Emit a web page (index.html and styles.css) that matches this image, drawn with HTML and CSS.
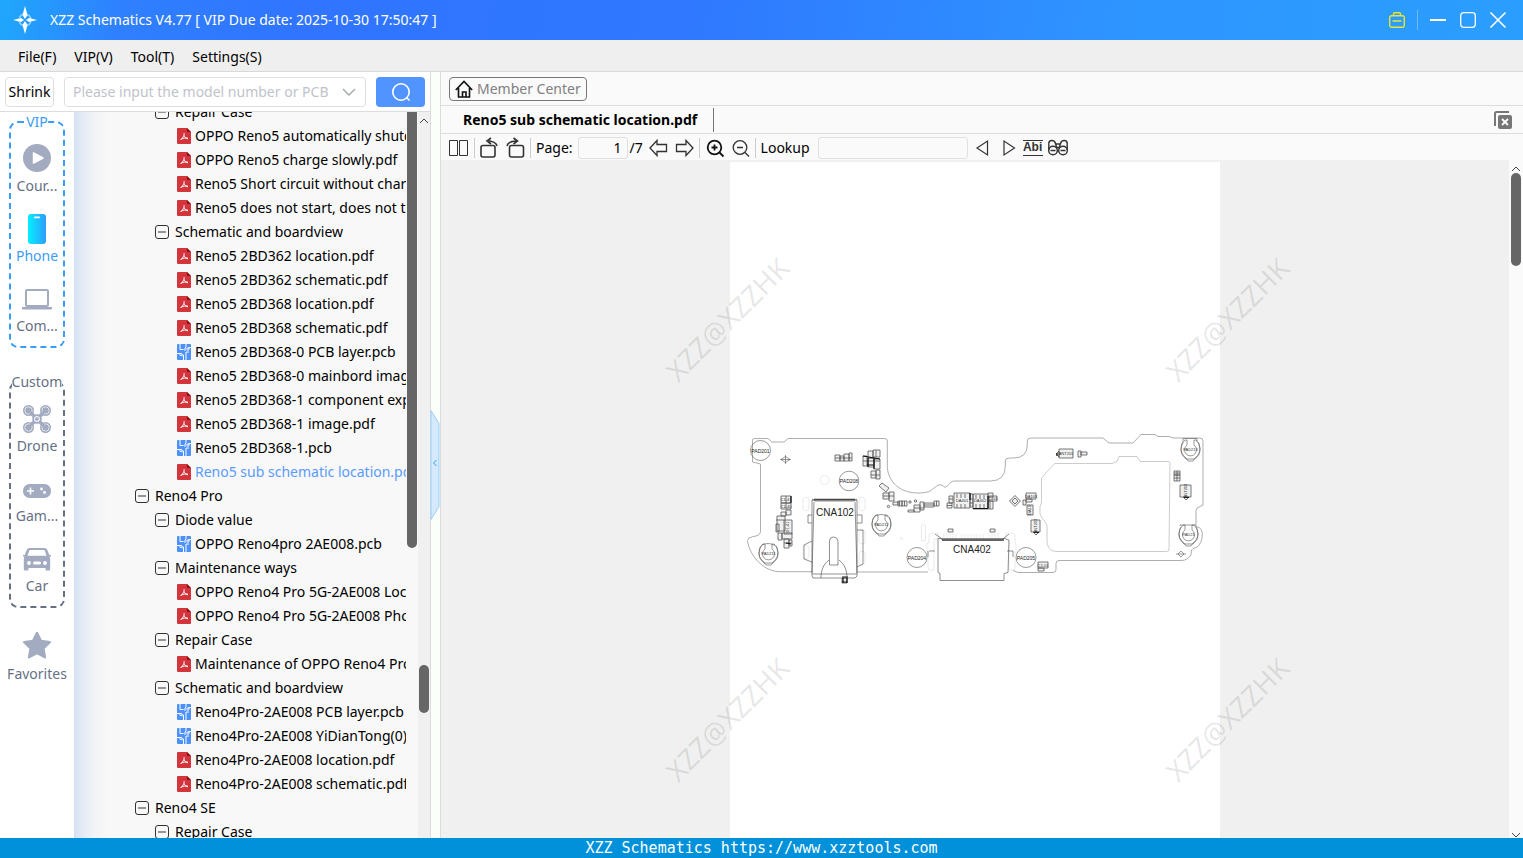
FILE: index.html
```html
<!DOCTYPE html>
<html lang="en">
<head>
    <meta charset="UTF-8">
    <meta name="viewport" content="width=device-width, initial-scale=1.0">
    <title>XZZ Schematics</title>
    <link rel="stylesheet" href="styles.css">
</head>
<body>
    <!-- Shared icons -->
    <svg class="sprite" aria-hidden="true">
        <symbol id="minus" viewBox="0 0 14 14">
            <rect x="0.5" y="0.5" width="13" height="13" rx="2.5" fill="none" stroke="#333"/>
            <path d="M3 7h8" stroke="#333"/>
        </symbol>
        <symbol id="pdf" viewBox="0 0 14 16">
            <path d="M1 0h9l4 4v11a1 1 0 0 1-1 1H1a1 1 0 0 1-1-1V1a1 1 0 0 1 1-1z" fill="#d4353d"/>
            <path d="M10 0l4 4h-4z" fill="#8c1219"/>
            <path d="M6.800 5c1 1.500 0 3.800-3.300 7M7 7.500c.8 2 2 3 4 3.200M4.500 11c2-1 4-1.200 6.500-.8" fill="none" stroke="#fff"/>
        </symbol>
        <symbol id="pcb" viewBox="0 0 14 16">
            <rect width="14" height="16" rx="1" fill="#4b90fb"/>
            <path d="M3 0v5.500h3.500M0 9.500h3M5 11h1.500v5M9 16V8h3M9 0v3l-1 1v3M11.500 3.500H14" fill="none" stroke="#fff"/>
            <circle cx="4" cy="10.500" r="1.200" fill="#4b90fb" stroke="#fff"/>
            <circle cx="11" cy="5" r="1.200" fill="#4b90fb" stroke="#fff"/>
        </symbol>
    </svg>

    <header class="titlebar">
        <svg class="logo" viewBox="0 0 24 28">
            <circle cx="12" cy="14" r="6" fill="none" stroke="#8fd0ff" stroke-width="1.500" stroke-dasharray="6 3.400" stroke-dashoffset="-1.700"/>
            <path d="M12 0l2.500 9-2.500 4-2.500-4zM12 28l2.500-9-2.500-4-2.500 4zM0 14l8-2 3 2-3 2zM24 14l-8-2-3 2 3 2z" fill="#fff"/>
        </svg>
        <h1>XZZ Schematics V4.77 [ VIP Due date: 2025-10-30 17:50:47 ]</h1>
        <div class="window-buttons">
            <button type="button" aria-label="Toolbox">
                <svg viewBox="0 0 16 16" fill="none" stroke="#e8e337" stroke-width="1.400"><rect x="0.700" y="3.700" width="14.600" height="11.600" rx="2"/><path d="M4.500 3.500V2a1.300 1.300 0 0 1 1.300-1.300h4.400A1.300 1.300 0 0 1 11.500 2v1.500M3.500 9h9"/></svg>
            </button>
            <span class="divider"></span>
            <button type="button" aria-label="Minimize">
                <svg viewBox="0 0 16 16" stroke="#fff" stroke-width="2"><path d="M0 8h16"/></svg>
            </button>
            <button type="button" aria-label="Maximize">
                <svg viewBox="0 0 16 16" fill="none" stroke="#fff" stroke-width="1.300"><rect x="0.700" y="0.700" width="14.600" height="14.600" rx="3"/></svg>
            </button>
            <button type="button" aria-label="Close">
                <svg viewBox="0 0 16 16" stroke="#fff" stroke-width="1.600"><path d="M.5.500l15 15M15.500.500l-15 15"/></svg>
            </button>
        </div>
    </header>

    <nav class="menubar">
        <a href="#">File(F)</a>
        <a href="#">VIP(V)</a>
        <a href="#">Tool(T)</a>
        <a href="#">Settings(S)</a>
    </nav>

    <main class="workspace">
        <section class="left-panel">
            <form class="search-row">
                <button type="button" class="shrink-btn">Shrink</button>
                <div class="search-box">
                    <input type="text" aria-label="Model number" placeholder="Please input the model number or PCB">
                    <svg viewBox="0 0 14 8" fill="none" stroke="#a0a5ae" stroke-width="1.400"><path d="M1 1l6 6 6-6"/></svg>
                </div>
                <button type="submit" class="search-btn" aria-label="Search">
                    <svg viewBox="0 0 20 20" fill="none" stroke="#fff" stroke-width="1.600"><circle cx="10" cy="10" r="8.200"/><path d="M15.500 15.500l3 3"/></svg>
                </button>
            </form>

            <div class="browser">
                <nav class="sidebar">
                    <fieldset class="group vip">
                        <legend>VIP</legend>
                        <a href="#" class="item">
                            <svg viewBox="0 0 28 28"><circle cx="14" cy="14" r="14" fill="#a2abc0"/><path d="M10.500 8.800v10.400l9.500-5.200z" fill="#fff" stroke="#fff" stroke-width="1.500" stroke-linejoin="round"/></svg>
                            <span>Cour...</span>
                        </a>
                        <a href="#" class="item active">
                            <svg viewBox="0 0 28 28">
                                <defs><linearGradient id="phone"><stop offset="0" stop-color="#04effe"/><stop offset="1" stop-color="#2e9dfc"/></linearGradient></defs>
                                <rect x="5" y="0" width="18" height="30" rx="3" fill="url(#phone)"/><rect x="11" y="2.500" width="6" height="1.800" rx="0.900" fill="#fff"/>
                            </svg>
                            <span>Phone</span>
                        </a>
                        <a href="#" class="item">
                            <svg viewBox="0 0 28 28"><rect x="3" y="6" width="22" height="16" rx="1" fill="none" stroke="#a2abc0" stroke-width="2"/><path d="M-1 23h30v1.500q0 1-1 1H0q-1 0-1-1z" fill="#a2abc0"/></svg>
                            <span>Com...</span>
                        </a>
                    </fieldset>

                    <fieldset class="group">
                        <legend>Custom</legend>
                        <a href="#" class="item">
                            <svg viewBox="0 0 28 28" fill="none" stroke="#a2abc0">
                                <g transform="translate(0 1)">
                                    <path d="M7 7l14 14M21 7L7 21" stroke-width="3.500"/>
                                    <g fill="#a2abc0" stroke="none"><circle cx="5.500" cy="5.500" r="5.500"/><circle cx="22.500" cy="5.500" r="5.500"/><circle cx="5.500" cy="22.500" r="5.500"/><circle cx="22.500" cy="22.500" r="5.500"/><circle cx="14" cy="14" r="4.800"/></g>
                                    <g stroke="#eef0f4" stroke-width="0.800"><circle cx="5.500" cy="5.500" r="3.700"/><circle cx="22.500" cy="5.500" r="3.700"/><circle cx="5.500" cy="22.500" r="3.700"/><circle cx="22.500" cy="22.500" r="3.700"/><circle cx="14" cy="14" r="2.400" stroke-width="1.200"/></g>
                                    <path d="M4 4l6 6M24 4l-6 6M4 24l6-6M24 24l-6-6" stroke-width="2.600"/>
                                </g>
                            </svg>
                            <span>Drone</span>
                        </a>
                        <a href="#" class="item">
                            <svg viewBox="0 0 28 28"><rect y="10" width="28" height="14" rx="6.500" fill="#a2abc0"/><path d="M7.500 13.500v7M4 17h7" stroke="#fff" stroke-width="1.600"/><circle cx="18.500" cy="15" r="1.400" fill="#fff"/><circle cx="21.500" cy="18.500" r="1.400" fill="#fff"/></svg>
                            <span>Gam...</span>
                        </a>
                        <a href="#" class="item">
                            <svg viewBox="0 0 28 28">
                                <g transform="translate(0 1)">
                                    <path d="M6.500 3h15q2 0 2.800 2l2 5H28v1.500h-1.500q.7 1 .7 2.500v10q0 1.500-1.500 1.500h-2q-1.200 0-1.200-1.500v-1h-17v1q0 1.500-1.200 1.500h-2Q.8 25.500.8 24V14q0-1.500.7-2.500H0V10h1.700l2-5q.8-2 2.800-2z" fill="#a2abc0"/>
                                    <path d="M7.200 5h13.600q.8 0 1 .8l1.700 5H4.500l1.700-5q.2-.8 1-.8z" fill="#fff"/>
                                    <circle cx="6" cy="18" r="1.900" fill="#fff"/><circle cx="22" cy="18" r="1.900" fill="#fff"/><rect x="10" y="16.500" width="8" height="3" rx="1.500" fill="#fff"/>
                                </g>
                            </svg>
                            <span>Car</span>
                        </a>
                    </fieldset>

                    <a href="#" class="item">
                        <svg viewBox="0 0 28 28"><path d="M14 1l3.900 8 8.800 1.200-6.400 6.200 1.600 8.800L14 21l-7.900 4.200 1.600-8.800-6.400-6.200L10.100 9z" fill="#a2abc0" stroke="#a2abc0" stroke-width="2.500" stroke-linejoin="round"/></svg>
                        <span>Favorites</span>
                    </a>
                </nav>

                <ul class="tree">
                    <li class="folder sub"><button type="button" aria-label="Collapse"><svg><use href="#minus"/></svg></button>Repair Case</li>
                    <li class="file"><svg><use href="#pdf"/></svg><a href="#">OPPO Reno5 automatically shutdown.pdf</a></li>
                    <li class="file"><svg><use href="#pdf"/></svg><a href="#">OPPO Reno5 charge slowly.pdf</a></li>
                    <li class="file"><svg><use href="#pdf"/></svg><a href="#">Reno5 Short circuit without charging.pdf</a></li>
                    <li class="file"><svg><use href="#pdf"/></svg><a href="#">Reno5 does not start, does not trigger.pdf</a></li>
                    <li class="folder sub"><button type="button" aria-label="Collapse"><svg><use href="#minus"/></svg></button>Schematic and boardview</li>
                    <li class="file"><svg><use href="#pdf"/></svg><a href="#">Reno5 2BD362 location.pdf</a></li>
                    <li class="file"><svg><use href="#pdf"/></svg><a href="#">Reno5 2BD362 schematic.pdf</a></li>
                    <li class="file"><svg><use href="#pdf"/></svg><a href="#">Reno5 2BD368 location.pdf</a></li>
                    <li class="file"><svg><use href="#pdf"/></svg><a href="#">Reno5 2BD368 schematic.pdf</a></li>
                    <li class="file"><svg><use href="#pcb"/></svg><a href="#">Reno5 2BD368-0 PCB layer.pcb</a></li>
                    <li class="file"><svg><use href="#pdf"/></svg><a href="#">Reno5 2BD368-0 mainbord image.pdf</a></li>
                    <li class="file"><svg><use href="#pdf"/></svg><a href="#">Reno5 2BD368-1 component explain.pdf</a></li>
                    <li class="file"><svg><use href="#pdf"/></svg><a href="#">Reno5 2BD368-1 image.pdf</a></li>
                    <li class="file"><svg><use href="#pcb"/></svg><a href="#">Reno5 2BD368-1.pcb</a></li>
                    <li class="file selected"><svg><use href="#pdf"/></svg><a href="#">Reno5 sub schematic location.pdf</a></li>
                    <li class="folder"><button type="button" aria-label="Collapse"><svg><use href="#minus"/></svg></button>Reno4 Pro</li>
                    <li class="folder sub"><button type="button" aria-label="Collapse"><svg><use href="#minus"/></svg></button>Diode value</li>
                    <li class="file"><svg><use href="#pcb"/></svg><a href="#">OPPO Reno4pro 2AE008.pcb</a></li>
                    <li class="folder sub"><button type="button" aria-label="Collapse"><svg><use href="#minus"/></svg></button>Maintenance ways</li>
                    <li class="file"><svg><use href="#pdf"/></svg><a href="#">OPPO Reno4 Pro 5G-2AE008 Location.pdf</a></li>
                    <li class="file"><svg><use href="#pdf"/></svg><a href="#">OPPO Reno4 Pro 5G-2AE008 Photo.pdf</a></li>
                    <li class="folder sub"><button type="button" aria-label="Collapse"><svg><use href="#minus"/></svg></button>Repair Case</li>
                    <li class="file"><svg><use href="#pdf"/></svg><a href="#">Maintenance of OPPO Reno4 Pro.pdf</a></li>
                    <li class="folder sub"><button type="button" aria-label="Collapse"><svg><use href="#minus"/></svg></button>Schematic and boardview</li>
                    <li class="file"><svg><use href="#pcb"/></svg><a href="#">Reno4Pro-2AE008 PCB layer.pcb</a></li>
                    <li class="file"><svg><use href="#pcb"/></svg><a href="#">Reno4Pro-2AE008 YiDianTong(0).pcb</a></li>
                    <li class="file"><svg><use href="#pdf"/></svg><a href="#">Reno4Pro-2AE008 location.pdf</a></li>
                    <li class="file"><svg><use href="#pdf"/></svg><a href="#">Reno4Pro-2AE008 schematic.pdf</a></li>
                    <li class="folder"><button type="button" aria-label="Collapse"><svg><use href="#minus"/></svg></button>Reno4 SE</li>
                    <li class="folder sub"><button type="button" aria-label="Collapse"><svg><use href="#minus"/></svg></button>Repair Case</li>
                </ul>

                <div class="tree-thumb"></div>
                <div class="scrollbar tree-scroll">
                    <svg viewBox="0 0 10 6" fill="none" stroke="#444"><path d="M1 5l4-4 4 4"/></svg>
                    <div class="thumb"></div>
                </div>
            </div>
        </section>

        <div class="splitter">
            <svg viewBox="0 0 9 110" fill="none">
                <path d="M0 .5l8 13v83l-8 13z" fill="#d6eaff" stroke="#99cdf8"/>
                <path d="M5.500 50L2.500 53l3 3" stroke="#2d9cf5"/>
            </svg>
        </div>

        <section class="viewer">
            <div class="member-row">
                <button type="button" class="member-btn">
                    <svg viewBox="0 0 18 18" fill="none" stroke="#111" stroke-width="1.600"><path d="M.8 10L9 1.500l8.200 8.500M3.500 8v9h11V8M7.500 17v-5h3.500v5"/></svg>
                    Member Center
                </button>
            </div>

            <div class="tabs">
                <a href="#" class="tab">Reno5 sub schematic location.pdf</a>
                <button type="button" class="close-tabs" aria-label="Close all tabs">
                    <svg viewBox="0 0 18 18"><path d="M1 15V2.500Q1 1 2.500 1H15" fill="none" stroke="#777" stroke-width="2"/><rect x="4" y="4" width="14" height="14" rx="2" fill="#777"/><path d="M8 8l6 6M14 8l-6 6" stroke="#fff" stroke-width="1.800"/></svg>
                </button>
            </div>

            <div class="toolbar">
                <button type="button" aria-label="Two pages"><svg viewBox="0 0 20 20"><path d="M.5 2.500h8v15h-8zM10.500 2.500h8v15h-8z"/></svg></button>
                <span class="sep"></span>
                <button type="button" aria-label="Rotate left"><svg viewBox="0 0 20 20" stroke-width="1.600"><rect x="1" y="7.500" width="14" height="11.500" rx="2"/><path d="M17 8q-1-5-10.500-5M11 0L7 3l4 3"/></svg></button>
                <button type="button" aria-label="Rotate right"><svg viewBox="0 0 20 20" stroke-width="1.600"><rect x="4.500" y="7.500" width="14" height="11.500" rx="2"/><path d="M2 8q1-5 10.500-5M8.500 0l4 3-4 3"/></svg></button>
                <span class="sep"></span>
                <label for="page">Page:</label>
                <span class="page-box"><input type="text" id="page" value="1">/7</span>
                <button type="button" aria-label="Previous page"><svg viewBox="0 0 20 20" stroke-width="1.300"><path d="M1 10l7-7.500v4h9.500v7H8v4z"/></svg></button>
                <button type="button" aria-label="Next page"><svg viewBox="0 0 20 20" stroke-width="1.300"><path d="M19 10l-7-7.500v4H2.500v7H12v4z"/></svg></button>
                <span class="sep"></span>
                <button type="button" aria-label="Zoom in"><svg viewBox="0 0 20 20" class="strong"><circle cx="9.500" cy="9.500" r="6.800"/><path d="M14.500 14.500l4 4M6.500 9.500h6M9.500 6.500v6"/></svg></button>
                <button type="button" aria-label="Zoom out"><svg viewBox="0 0 20 20" stroke-width="1.300"><circle cx="10" cy="9.500" r="6.800"/><path d="M15 14.500l4 4M7 9.500h6"/></svg></button>
                <span class="sep"></span>
                <label for="lookup">Lookup</label>
                <input type="text" id="lookup" class="lookup">
                <button type="button" aria-label="Find previous"><svg viewBox="0 0 20 20" stroke-width="1.200"><path d="M14.500 3v14L4 10z"/></svg></button>
                <button type="button" aria-label="Find next"><svg viewBox="0 0 20 20" stroke-width="1.200"><path d="M6 3v14l10.500-7z"/></svg></button>
                <button type="button" class="abi">Abi</button>
                <button type="button" aria-label="Find"><svg viewBox="0 0 20 20" stroke-width="1.400"><circle cx="5" cy="12.500" r="4.300"/><circle cx="15" cy="12.500" r="4.300"/><path d="M.8 12V5.500q0-3 3-3t3.700 3l1.500 5M19.200 12V5.500q0-3-3-3t-3.700 3l-1.500 5M7.500 6h5M9 9.500h2M9 13h2M2.500 12.500h5M12.500 12.500h5"/></svg></button>
            </div>

            <div class="canvas">
                <div class="page">
                    <svg class="board" viewBox="730 425 490 170">
                        <g class="outline">
                            <path d="M760.500 464l-8-2V440.500q0-2 2-2H768l4 3.500h12l4-3.500h97q2.300 0 2.300 2.500v25c0 12 9 27 31 27 12 0 13-3 17-6 4-3 6-3 9 0 4 1 5-6 10-6h36q15 0 15-15v-5q0-3 4-3h4q14 0 14-13v-4q0-3 3.500-3H1103l6 5h24l8-8.500h14l3 2h11l4 1.500h27q3 0 3 3v64l-3 1.500q-4 1-4 4v16q8 1 6 12-2 9-9 10-2 0-2 6-3 6-10 6h-122q-3 0-3 3v6q0 3-3 3H1018l-5-2M928 572h-71M812 571.700h-32c-15 0-30-14-32.500-31q0-3 5-4 8-1 8-5V464"/>
                            <path class="faint" d="M1055 463.500h57l5-2 2-5h18l3 5h28q2 0 2 2l-1 86q0 2-3 2h-109c-7 0-10-5-10-11v-14c0-5-7-8-7-14v-6l1.500-4v-24q4-6 13.500-15z"/>
                        </g>

                        <!-- Test pads -->
                        <g class="pads">
                            <circle cx="760.500" cy="450.500" r="10"/><circle cx="849" cy="481" r="9.800"/>
                            <circle cx="917" cy="557.500" r="10"/><circle cx="1026" cy="557.500" r="10"/>
                            <g id="clip">
                                <path d="M763 544q-4 3-4 9 0 7 5 9l2 3h5l2-3q5-2 5-9 0-6-4-9h-2v5a6 6 0 1 1-7 0v-5z"/>
                                <path d="M761 546q-2 3-2 7t2 6l3 4h9l3-4q2-3 2-6t-2-7"/>
                            </g>
                            <use href="#clip" x="113" y="-29"/>
                            <use href="#clip" x="422" y="-104"/>
                            <use href="#clip" x="420" y="-19"/>
                            <path d="M761 545.500q7-4 14 0M874 516.500q7-4 14 0M1183 441.500v-3h14v3M1180 526v-1h16M780 459.500h11M785.500 455v9M781 459.500l4.500-3 4.500 3-4.500 3zM1176 554h10M1181 551l3 3-3 3-3-3z"/>
                        </g>
                        <g class="ghost">
                            <circle cx="824.500" cy="480" r="4.500"/><circle cx="901.500" cy="538.500" r="1"/>
                            <rect x="803" y="497" width="6" height="14" rx="3"/><rect x="859" y="497" width="6" height="14" rx="3"/>
                            <rect x="803" y="545" width="6" height="14" rx="3"/><rect x="859" y="530" width="6" height="14" rx="3"/><rect x="859" y="551" width="6" height="14" rx="3"/>
                            <rect x="921.500" y="525" width="4" height="16" rx="1"/>
                            <path d="M929 535q0-2 4-2h5v6h-4v31h-4q-2 0-2-3v-15h-1v-9h2zM1015 535q0-2-4-2h-5v6h3v31h3q3 0 3-3v-15h1v-9h-1z"/>
                            <path d="M944 533v6M947 533v6M950 533v6M953 533v6M956 533v6M962 534v5M965 534v5M968 534v5M971 534v5M974 534v5M977 534v5M980 534v5M983 534v5M989 533v6M992 533v6M995 533v6M998 533v6"/>
                        </g>

                        <!-- CNA102 and CNA402 connectors -->
                        <g class="connector">
                            <path d="M812 500h45v76l-2 2h-42l-1-2zM812 499l3 2h39l3-2M814 502l-2 71M855 502l2 71M812 574h45M821 578c0-9 3-14 8-18M847 578c0-9-3-14-8-18"/>
                            <path d="M829.500 565v-24q0-4 4-4t4.500 4v24zM812 515h-4v8h4M857 515h5v8h-5M812 541l-8 4v14l8 3M857 530h6v34l-6 3"/>
                            <path d="M938 538.500h67l4 2-1 32-4 1v7h-64v-7l-2-1v-32zM935 534l6 4 1 2h60l2-2 5-4M928 551v6M1013 551v6M929 551h6M1007 551h6"/>
                            <path d="M814 499.500h41M942 540h62" stroke-width="1.400"/>
                        </g>

                        <!-- Small components -->
                        <g class="parts">
                            <path d="M835 455h5v6h-5zM840 456h4v5h-4zM844 454h5v7h-5zM849 453h3v8h-3zM835 458h17"/>
                            <path d="M868 451h5v7h-5zM873 450h7v7h-7zM863 456h4v10h-4zM868 458h6v9h-6zM874 459h6v10h-6zM871 471h5v7h-5zM876 470h4v9h-4zM876 450v7M863 461h17M871 475h9"/>
                            <path d="M882 483l7 5-3 4-7-6zM883 493h6v6h-6zM889 492h5v9h-5zM893 502h5v3h-5zM898 501h4v5h-4zM902 501h5v5h-5zM883 496h11M899.500 501v5M904.500 501v5"/>
                            <path d="M908 510h6v2h-6zM914 505h6v7h-6zM920 502h4v8h-4zM924 503h10v4h-10zM934 501h5v5h-5zM914 508h10M924 505h10M936.500 501v5"/>
                            <path d="M947 503h5v5h-5zM949 496h4v7h-4zM954 493h16v15h-16zM970 494h3v13h-3zM973 494h15v15h-15zM988 493h5v4h-5zM989 496h8v5h-8zM988 501h5v8h-5z"/>
                            <path d="M957 494v4M961 494v4M965 494v4M957 504v4M961 504v4M965 504v4M976 495v4M980 495v4M984 495v4M976 504v4M980 504v4M984 504v4M947 505.500h5M949 499h4M970 499h3M970 503h3M990 501v8"/>
                            <path d="M1009.500 501l5.500-5.500 5.500 5.500-5.500 5.500zM1012 501l3-3 3 3-3 3zM1023 500h3v5h-3zM1026 493h10v6h-10zM1026 499h6v3h-6zM1027 505h6v10h-6zM1031 520h9v12h-9zM1033 532l3 3 3-3zM1038 562h10v6h-10zM1038 568h6v3h-6z"/>
                            <path d="M1059 449h14v9h-14zM1059 451l-3 3 3 3zM1078 451h3v6h-3zM1081 452h6v3h-6zM1174 471h6v4h-6zM1174 475h6v6h-6zM1180 485h11v12h-11zM1183 497l3 3 3-3zM1174 473h6M1174 478h6M1177 471v10"/>
                            <path d="M781 496h10v7h-10zM781 503h10v6h-10zM786 510h5v5h-5zM781 512h5v4h-5zM777 516h8v15h-8zM784 520h8v14h-8zM776 524h3v8h-3zM782 533h10v6h-10zM784 539h5v9h-5zM778 533h4v7h-4zM789 540h3v6h-3zM776 520h8M784 543h8M786 496v13"/>
                            <path d="M948 529h5v3h-5zM990 529h5v3h-5zM842 578h5v5h-5z"/>
                            <circle cx="888.500" cy="506.500" r="1.200"/><circle cx="910" cy="502" r="1.200"/><circle cx="915.500" cy="501" r="1.200"/>
                        </g>
                        <g class="dark">
                            <path d="M868 458v9M874 458v11M863 456l17 3M867 465h7M791 496v7M970 493v7M973 508.500h15M988 496v12M842 577h6M843 578v5M847 578v5M842 582h5M1034 532.500h5M1184 497.500h5M1057 453v3M786 543l5 1"/>
                        </g>

                        <g class="labels">
                            <text x="760.500" y="452.500">PAD201</text><text x="849" y="483">PAD208</text>
                            <text x="917" y="559.500">PAD204</text><text x="1026" y="559.500">PAD205</text>
                            <text class="big" x="835" y="516">CNA102</text><text class="big" x="972" y="553">CNA402</text>
                            <g class="small">
                                <text x="768.500" y="555">PAD211</text><text x="881.500" y="526">PAD212</text><text x="1190.500" y="451">PAD213</text><text x="1188.500" y="536">PAD21</text>
                                <text x="962" y="502">DA401</text><text x="980" y="502">DA402</text><text x="1066" y="455">ANT201</text>
                                <text x="786" y="501">C1-41</text><text x="786" y="508">C1-40</text><text x="1031" y="498">DA103</text><text x="1043" y="567">C2-01</text><text x="993" y="500">C401</text>
                                <text transform="translate(789 527) rotate(-90)">D1-41</text><text transform="translate(1187 491) rotate(-90)">ANT202</text><text transform="translate(1037 526) rotate(-90)">ANT203</text><text transform="translate(1031 510) rotate(-90)">DA10</text>
                            </g>
                        </g>
                    </svg>
                </div>
                <span class="watermark top start">XZZ@XZZHK</span>
                <span class="watermark top end">XZZ@XZZHK</span>
                <span class="watermark low start">XZZ@XZZHK</span>
                <span class="watermark low end">XZZ@XZZHK</span>
                <div class="scrollbar page-scroll">
                    <svg viewBox="0 0 10 6" fill="none" stroke="#444"><path d="M1 5l4-4 4 4"/></svg>
                    <div class="thumb"></div>
                    <svg class="down" viewBox="0 0 10 6" fill="none" stroke="#444"><path d="M1 1l4 4 4-4"/></svg>
                </div>
            </div>
        </section>
    </main>

    <footer class="statusbar">XZZ Schematics https://www.xzztools.com</footer>
</body>
</html>
```
FILE: styles.css
```css
* {
    margin: 0;
    padding: 0;
    box-sizing: border-box;
}

body {
    font-family: 'Noto Sans', 'Open Sans', sans-serif;
    font-size: 14px;
    line-height: 20px;
    color: #000;
    height: 100vh;
    display: flex;
    flex-direction: column;
    overflow: hidden;
}

a {
    color: inherit;
    text-decoration: none;
}

button,
input {
    font: inherit;
    color: inherit;
}

button {
    background: none;
    border: none;
    cursor: pointer;
}

svg {
    display: block;
    flex: none;
    overflow: visible;
}

.sprite {
    position: absolute;
    width: 0;
    height: 0;
}

/* Title bar */
.titlebar {
    height: 40px;
    flex: none;
    display: flex;
    align-items: center;
    gap: 13px;
    padding: 0 17px 0 13px;
    color: #fff;
    background: linear-gradient(100deg, #1fa8fc 0%, #2f80ff 8%, #3074ff 20%, #2f78ff 45%, #2e96ff 75%, #2a9efe 100%);
}

.titlebar h1 {
    flex: 1;
    font-size: 14px;
    font-weight: 400;
}

.logo {
    width: 24px;
    height: 28px;
}

.window-buttons {
    display: flex;
    align-items: center;
    gap: 14px;
}

.window-buttons svg {
    width: 16px;
    height: 16px;
}

.window-buttons .divider {
    width: 1px;
    height: 20px;
    margin: 0 -2px;
    background: #6fbcff;
}

/* Menu */
.menubar {
    height: 32px;
    flex: none;
    display: flex;
    align-items: center;
    gap: 18px;
    padding: 2px 0 0 18px;
    background: #efefef;
    border-bottom: 1px solid #d9d9d9;
}

.workspace {
    flex: 1;
    min-height: 0;
    display: flex;
}

/* Left panel */
.left-panel {
    width: 431px;
    flex: none;
    display: flex;
    flex-direction: column;
    border-right: 1px solid #dcdcdc;
}

.search-row {
    height: 40px;
    flex: none;
    display: flex;
    align-items: center;
    gap: 10px;
    padding: 0 5px;
    border-bottom: 1px solid #dcdcdc;
}

.shrink-btn {
    width: 49px;
    height: 30px;
    border: 1px solid #dcdfe3;
    border-radius: 4px;
}

.search-box {
    flex: 1;
    height: 30px;
    display: flex;
    align-items: center;
    padding: 0 9px 0 8px;
    border: 1px solid #dcdfe3;
    border-radius: 4px;
}

.search-box input {
    flex: 1;
    min-width: 0;
    border: none;
    outline: none;
    background: none;
}

.search-box input::placeholder {
    color: #bfc3cb;
}

.search-box svg {
    width: 14px;
    height: 8px;
    margin-left: 6px;
}

.search-btn {
    width: 49px;
    height: 30px;
    display: grid;
    place-items: center;
    border-radius: 4px;
    background: #5294ff;
}

.search-btn svg {
    width: 20px;
    height: 20px;
}

.browser {
    flex: 1;
    min-height: 0;
    display: flex;
    overflow: hidden;
}

.sidebar {
    width: 74px;
    flex: none;
    display: flex;
    flex-direction: column;
    align-items: center;
    gap: 24px;
    color: #667085;
}

.group {
    width: 56px;
    min-width: 0;
    display: flex;
    flex-direction: column;
    gap: 16px;
    padding: 12px 0 8px;
    border: 2px dashed #667085;
    border-radius: 9px;
}

.group legend {
    margin: 0 auto;
    white-space: nowrap;
}

.group.vip {
    border-color: #3a9cf5;
}

.vip legend,
.item.active {
    color: #3a9cf5;
}

.item {
    display: flex;
    flex-direction: column;
    align-items: center;
    gap: 2px;
    line-height: 24px;
}

.item svg {
    width: 28px;
    height: 28px;
}

/* File tree */
.tree {
    flex: 1;
    min-width: 0;
    list-style: none;
    margin-top: -12px;
    padding-left: 61px;
    background: linear-gradient(90deg, #d6e1f4 0, #e6ecf5 10px, #f1f3f7 20px, #f8f8f8 34px);
}

.tree li {
    height: 24px;
    display: flex;
    align-items: center;
    overflow: hidden;
    white-space: nowrap;
}

.folder {
    gap: 6px;
}

.folder svg {
    width: 14px;
    height: 14px;
}

.folder.sub {
    padding-left: 20px;
}

.file {
    gap: 4px;
    padding-left: 42px;
}

.file svg {
    width: 14px;
    height: 16px;
}

.file a {
    flex: 1;
    min-width: 0;
    overflow: hidden;
}

.file.selected {
    color: #5b9bff;
}

.tree-thumb {
    width: 12px;
    flex: none;
    background: #f8f8f8;
    padding: 0 1px;
}

.tree-thumb::before {
    content: '';
    display: block;
    height: 60%;
    border-radius: 0 0 5px 5px;
    background: #666;
}

.scrollbar {
    flex: none;
    display: flex;
    flex-direction: column;
    align-items: center;
    padding-top: 6px;
}

.scrollbar svg {
    width: 10px;
    height: 6px;
}

.thumb {
    width: 10px;
    border-radius: 5px;
    background: #666;
}

.tree-scroll {
    width: 12px;
    background: #f0f0f0;
}

.tree-scroll .thumb {
    height: 48px;
    margin-top: 541px;
}

.splitter {
    width: 10px;
    flex: none;
    display: flex;
    align-items: center;
    padding-top: 20px;
    background: #fbfff9;
    border-right: 1px solid #dcdcdc;
}

.splitter svg {
    width: 9px;
    height: 110px;
}

/* Document viewer */
.viewer {
    flex: 1;
    min-width: 0;
    display: flex;
    flex-direction: column;
    background: #fafafa;
}

.member-row {
    height: 34px;
    flex: none;
    display: flex;
    align-items: center;
    padding-left: 8px;
    border-bottom: 1px solid #dcdcdc;
}

.member-btn {
    height: 24px;
    display: flex;
    align-items: center;
    gap: 4px;
    padding: 0 5px;
    color: #808080;
    border: 1px solid #777;
    border-radius: 4px;
}

.member-btn svg {
    width: 18px;
    height: 18px;
}

.tabs {
    height: 28px;
    flex: none;
    display: flex;
    align-items: center;
    justify-content: space-between;
    padding-right: 11px;
    border-bottom: 1px solid #dcdcdc;
}

.tab {
    padding: 2px 16px 2px 22px;
    font-weight: 700;
    border-right: 1px solid #777;
}

.close-tabs svg {
    width: 18px;
    height: 18px;
}

.toolbar {
    height: 26px;
    flex: none;
    display: flex;
    align-items: center;
    gap: 5px;
    padding: 1px 0 0 8px;
}

.toolbar button {
    width: 20px;
    height: 20px;
}

.toolbar svg {
    width: 20px;
    height: 20px;
    fill: none;
    stroke: #333;
}

.toolbar svg.strong {
    stroke: #111;
    stroke-width: 1.8;
}

.toolbar input {
    height: 22px;
    border: 1px solid #e0e0e0;
    border-radius: 3px;
    background: #fafafa;
}

.sep {
    width: 1px;
    height: 20px;
    background: #ccc;
}

.page-box {
    width: 66px;
    display: flex;
    align-items: center;
    gap: 2px;
}

.page-box input {
    width: 50px;
    padding-right: 5px;
    text-align: right;
}

.toolbar .lookup {
    width: 150px;
    margin-left: 3px;
    padding: 0 4px;
}

.toolbar .abi {
    height: 16px;
    font-family: 'Liberation Sans', sans-serif;
    font-size: 12px;
    font-weight: 700;
    line-height: 13px;
    color: #333;
    border-top: 1px solid #333;
    border-bottom: 1px solid #333;
}

.canvas {
    flex: 1;
    min-height: 0;
    position: relative;
    display: flex;
    background: #f0f0f0;
}

.page {
    width: 490px;
    margin: 2px auto 0;
    display: flex;
    align-items: flex-start;
    justify-content: center;
    padding-top: 263px;
    background: #fff;
}

.board {
    width: 100%;
    fill: none;
    stroke: #777;
    stroke-width: 0.6;
}

.board .faint {
    stroke: #aaa;
}

.board .ghost {
    stroke: #ddd;
}

.board .pads {
    stroke: #555;
}

.board .parts {
    fill: rgba(0, 0, 0, 0.06);
    stroke: #555;
    stroke-width: 0.8;
}

.board .connector {
    stroke: #444;
}

.board .dark {
    stroke: #111;
    stroke-width: 1.2;
}

.board .labels {
    fill: #222;
    stroke: none;
    font-family: 'Liberation Sans', sans-serif;
    font-size: 5px;
    text-anchor: middle;
}

.board .small {
    fill: #333;
    font-size: 4px;
}

.board .big {
    font-size: 10px;
}

/* Watermarks float over the page */
.watermark {
    position: absolute;
    width: 180px;
    font-size: 28px;
    line-height: 40px;
    text-align: center;
    color: rgba(0, 0, 0, 0.1);
    transform: rotate(-45deg);
    pointer-events: none;
}

.watermark.top {
    top: 139px;
}

.watermark.low {
    top: 539px;
}

.watermark.start {
    left: 196px;
}

.watermark.end {
    left: 696px;
}

.page-scroll {
    width: 14px;
    background: #fafafa;
}

.page-scroll .thumb {
    height: 93px;
    margin-top: 1px;
}

.page-scroll .down {
    margin-top: auto;
}

/* Footer */
.statusbar {
    height: 20px;
    flex: none;
    font-family: 'DejaVu Sans Mono', monospace;
    font-size: 15px;
    line-height: 20px;
    text-align: center;
    color: #fff;
    background: #0091da;
}
```
